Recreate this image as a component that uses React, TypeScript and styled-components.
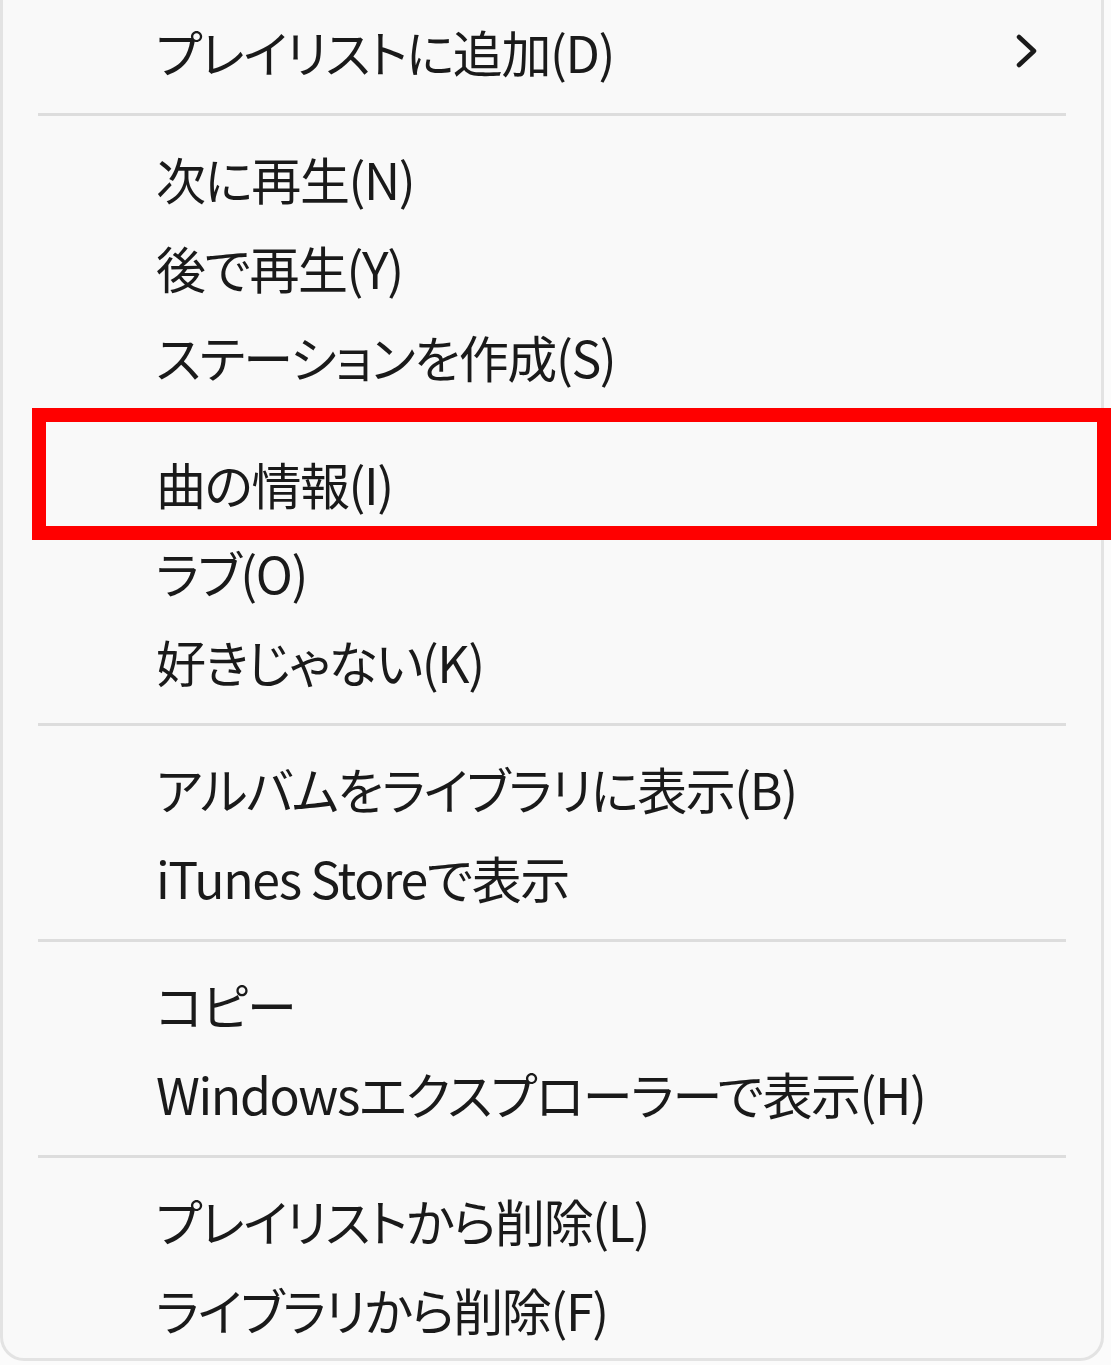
import React from "react";
import styled, { createGlobalStyle } from "styled-components";

const GlobalStyle = createGlobalStyle`
  html, body {
    margin: 0;
    padding: 0;
    background: #fbfbfb;
    overflow: hidden;
  }
`;

const Page = styled.div`
  position: relative;
  width: 1111px;
  height: 1365px;
`;

const Menu = styled.div`
  box-sizing: border-box;
  width: 1104px;
  background: #f9f9f9;
  border: 3px solid #e3e3e3;
  border-top: none;
  border-radius: 0 0 24px 24px;
  padding: 6px 0 5px;
  font-family: "Noto Sans CJK JP", sans-serif;
  font-feature-settings: "palt";
  font-size: 50px;
  letter-spacing: -1.4px;
  color: #1a1a1a;
`;

const Item = styled.div`
  height: 89px;
  display: flex;
  align-items: center;
  justify-content: space-between;
  padding: 0 62px 0 153px;
  white-space: nowrap;
`;

const Label = styled.span`
  line-height: 1;
`;

const Separator = styled.div`
  height: 38px;
  display: flex;
  align-items: center;
  padding: 0 35px;

  &::before {
    content: "";
    flex: 1;
    height: 3px;
    background: #dddddd;
  }
`;

const Highlight = styled.div`
  position: absolute;
  box-sizing: border-box;
  left: 32px;
  top: 408px;
  width: 1079px;
  height: 132px;
  border: 14px solid #ff0000;
  pointer-events: none;
`;

const Chevron = () => (
  <svg width="24" height="34" viewBox="0 0 24 34">
    <polyline
      points="4,3 19,17 4,31"
      fill="none"
      stroke="#1a1a1a"
      strokeWidth="4.5"
      strokeLinecap="round"
      strokeLinejoin="round"
    />
  </svg>
);

type Entry = { label: string; submenu?: boolean } | "sep";

const entries: Entry[] = [
  { label: "プレイリストに追加(D)", submenu: true },
  "sep",
  { label: "次に再生(N)" },
  { label: "後で再生(Y)" },
  { label: "ステーションを作成(S)" },
  "sep",
  { label: "曲の情報(I)" },
  { label: "ラブ(O)" },
  { label: "好きじゃない(K)" },
  "sep",
  { label: "アルバムをライブラリに表示(B)" },
  { label: "iTunes Storeで表示" },
  "sep",
  { label: "コピー" },
  { label: "Windowsエクスプローラーで表示(H)" },
  "sep",
  { label: "プレイリストから削除(L)" },
  { label: "ライブラリから削除(F)" },
];

export default function App() {
  return (
    <Page>
      <GlobalStyle />
      <Menu>
        {entries.map((e, i) =>
          e === "sep" ? (
            <Separator key={i} />
          ) : (
            <Item key={i}>
              <Label>{e.label}</Label>
              {e.submenu && <Chevron />}
            </Item>
          )
        )}
      </Menu>
      <Highlight />
    </Page>
  );
}
